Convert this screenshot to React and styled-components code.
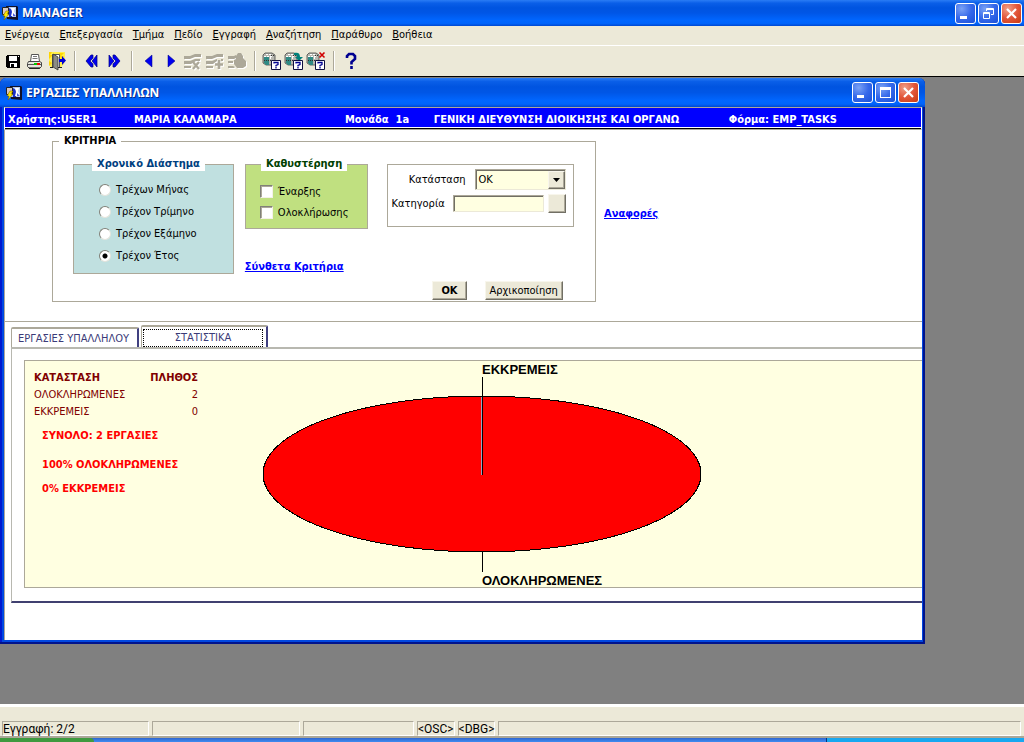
import styled, { createGlobalStyle, css } from "styled-components";

const GlobalStyle = createGlobalStyle`
  * {
    box-sizing: border-box;
  }
  body {
    margin: 0;
    font-family: "DejaVu Sans Condensed", "DejaVu Sans", sans-serif;
    font-size: 11px;
    line-height: 14px;
    color: #000;
    background: #808080;
  }
  button, input, select {
    font: inherit;
    color: inherit;
    margin: 0;
  }
`;

const Shell = styled.div`
  min-height: 100vh;
  display: flex;
  flex-direction: column;
`;

/* ---------- title bars ---------- */

const TitleBar = styled.header`
  display: flex;
  align-items: center;
  gap: 4px;
  height: ${(p) => (p.$child ? 29 : 26)}px;
  padding: 0 ${(p) => (p.$child ? 6 : 2)}px;
  color: #fff;
  background: linear-gradient(
    #2a7cf5 0%,
    #0a5fe8 12%,
    #0054e0 30%,
    #0056e6 50%,
    #0066ff 78%,
    #0064fb 90%,
    #0048d0 100%
  );
  border-radius: ${(p) => (p.$child ? "6px 6px 0 0" : "0")};

  h1, h2 {
    flex: 1;
    margin: 0;
    font-family: "Noto Sans", "Open Sans", sans-serif;
    font-size: 12px;
    line-height: 16px;
    font-weight: bold;
    text-shadow: 1px 1px 0 #0a2a8c;
  }
`;

const WindowButtons = styled.div`
  display: flex;
  gap: 2px;
`;

const WindowButton = styled.button`
  display: flex;
  width: 21px;
  height: 21px;
  padding: 0;
  border: 1px solid #fff;
  border-radius: 3px;
  background: ${(p) =>
    p.$close
      ? "radial-gradient(circle at 30% 25%, #f0a088, #e2563a 50%, #c83a10)"
      : "radial-gradient(circle at 30% 25%, #7aa2f5, #3568ea 50%, #1a50d8)"};

  svg {
    width: 19px;
    height: 19px;
  }
`;

/* ---------- menu and toolbar ---------- */

const MenuBar = styled.nav`
  display: flex;
  gap: 10px;
  height: 20px;
  padding: 2px 5px 0;
  background: #ece9d8;
  border-bottom: 1px solid #fff;

  a {
    color: #000;
    text-decoration: none;
  }
`;

const ToolBar = styled.div`
  display: flex;
  align-items: center;
  height: 31px;
  padding: 0 2px;
  background: #ece9d8;
  border-bottom: 1px solid #000;
`;

const ToolButton = styled.button`
  display: flex;
  align-items: center;
  justify-content: center;
  width: 22px;
  height: 22px;
  padding: 0;
  border: 0;
  background: none;

  svg {
    width: 20px;
    height: 20px;
  }
`;

const Separator = styled.span`
  width: 2px;
  height: 20px;
  margin: 0 5px 0 6px;
  background: #aca899;
  border-right: 1px solid #fff;
`;

/* ---------- inner window ---------- */

const Desktop = styled.main`
  flex: 1;
  padding-top: 1px;
  background: #808080;
`;

const ChildWindow = styled.section`
  width: 90.3%;
  min-width: 760px;
  background: #0048e0;
  border-radius: 6px 6px 0 0;
  box-shadow: inset -2px -2px 0 #00138c, inset 2px 0 0 #0019cf;
`;

const ChildBody = styled.div`
  margin: 0 3px 0 4px;
  padding-bottom: 4px;
`;

const Client = styled.div`
  display: flow-root;
  padding-bottom: 37px;
  background: #fff;
  border-left: 1px solid #aca899;
`;

const UserBar = styled.div`
  display: grid;
  grid-template-columns: 126fr 211fr 89fr 295fr 192fr;
  align-items: center;
  height: 23px;
  padding: 2px 0 0 3px;
  color: #fff;
  font-weight: bold;
  white-space: nowrap;
  background: linear-gradient(#0000ff 19px, #fff 19px, #fff 20px, #000 20px);
  border: 1px solid #fff;
  border-top-color: #aca899;
  border-bottom-color: #aca899;
`;

const Top = styled.div`
  display: flex;
  gap: 8px;
  padding: 4px 0 19px 47px;
  border-bottom: 1px solid #aca899;
`;

const Group = styled.fieldset`
  min-width: 0;
  margin: 0;
  padding: 0;
  border: 1px solid #aca899;

  legend {
    padding: 0 5px;
    font-weight: bold;
    white-space: nowrap;
    background: #fff;
  }
`;

const Criteria = styled(Group)`
  display: flex;
  gap: 11px;
  width: 544px;
  height: 168px;
  padding: 9px 20px 0;

  > legend {
    margin-left: -14px;
  }
`;

const TintedGroup = styled(Group)`
  background: ${(p) => p.$tint};
  padding: ${(p) => p.$pad};

  legend {
    margin: 0 auto;
    color: ${(p) => p.$ink};
  }
`;

const Column = styled.div`
  display: flex;
  flex-direction: column;
  align-items: flex-start;
  gap: 31px;
`;

const ColumnRight = styled.div`
  margin-left: 8px;
  padding-top: 7px;
`;

const Choice = styled.label`
  display: flex;
  align-items: center;
  gap: 5px;
  height: ${(p) => p.$row}px;
  margin-left: ${(p) => p.$indent || 0}px;
  white-space: nowrap;
`;

const Radio = styled.input`
  appearance: none;
  width: 12px;
  height: 12px;
  border: 1px solid;
  border-color: #808078 #e4e4dc #e4e4dc #808078;
  border-radius: 50%;
  background: #fff;

  &:checked {
    background: radial-gradient(circle, #000 2px, #fff 3px);
  }
`;

const CheckBox = styled.input`
  appearance: none;
  width: 13px;
  height: 13px;
  border: 1px solid;
  border-color: #808078 #f4f2e8 #f4f2e8 #808078;
  background: #fff;
  box-shadow: inset 1px 1px 0 #aca899;

  &:checked {
    background: #404040;
  }
`;

const Link = styled.a`
  color: #0000ff;
  font-weight: bold;
  white-space: nowrap;
`;

const Reports = styled.div`
  padding-top: 73px;
`;

const FilterBox = styled.div`
  display: flex;
  flex-direction: column;
  gap: 4px;
  width: 187px;
  height: 63px;
  padding: 4px 7px 0 3px;
  border: 1px solid #aca899;
`;

const FilterRow = styled.div`
  display: flex;
  align-items: center;
  justify-content: flex-end;
  gap: ${(p) => p.$gap}px;

  label {
    margin-right: ${(p) => (p.$spread ? "auto" : "0")};
    white-space: nowrap;
  }
`;

const sunken = css`
  border: 1px solid;
  border-color: #aca899 #ece9d8 #ece9d8 #aca899;
  box-shadow: inset 1px 1px 0 #716f64;
  background: #ffffe1;
`;

const raised = css`
  border: 1px solid;
  border-color: #f8f6ec #716f64 #716f64 #f8f6ec;
  box-shadow: inset -1px -1px 0 #aca899;
  background: #ece9d8;
`;

const SelectWrap = styled.span`
  position: relative;
  display: flex;
  width: 91px;
  height: 21px;
  ${sunken}

  select {
    appearance: none;
    width: 100%;
    padding: 0 20px 0 2px;
    border: 0;
    background: none;
  }
`;

const SelectArrow = styled.span`
  position: absolute;
  top: 1px;
  right: 0;
  display: flex;
  align-items: center;
  justify-content: center;
  width: 17px;
  height: 18px;
  pointer-events: none;
  ${raised}
`;

const TextBox = styled.input`
  width: 91px;
  height: 17px;
  padding: 0 3px;
  ${sunken}
`;

const PushButton = styled.button`
  height: 19px;
  min-width: 18px;
  padding: 0 ${(p) => p.$pad || 0}px;
  font-weight: ${(p) => (p.$strong ? "bold" : "normal")};
  line-height: 14px;
  white-space: nowrap;
  ${raised}
`;

const Actions = styled.div`
  display: flex;
  gap: 18px;
  margin: 54px 0 0 45px;
`;

/* ---------- tabs ---------- */

const Tabs = styled.div`
  display: flex;
  align-items: flex-end;
  gap: 2px;
  padding: 3px 0 0 6px;
`;

const Tab = styled.button`
  width: ${(p) => (p.$active ? 127 : 128)}px;
  height: ${(p) => (p.$active ? 22 : 20)}px;
  padding: 1px 3px 0 1px;
  color: #3b3b78;
  background: #fff;
  border: 1px solid #aca899;
  border-top-width: 2px;
  border-right: 2px solid #404080;
  border-bottom: 0;
  border-radius: 2px 2px 0 0;

  span {
    display: block;
    line-height: 16px;
    white-space: nowrap;
    border: 1px ${(p) => (p.$active ? "dotted #000" : "solid transparent")};
  }
`;

const TabPanel = styled.div`
  margin-left: 6px;
  padding: 11px 0 13px 12px;
  border: 2px solid #b8b8b0;
  border-width: 2px 0 2px 1px;
  border-bottom: 2px solid #404070;
`;

const Statistics = styled.div`
  display: flex;
  min-height: 228px;
  padding: 0 0 0 9px;
  background: #ffffe1;
  border: 1px solid #aca899;
  border-right: 0;
`;

const Summary = styled.div`
  width: 229px;
  padding-top: 8px;

  p {
    margin: 0 0 10px 8px;
    color: #ff0000;
    font-weight: bold;
  }
  p:first-of-type {
    margin: 9px 0 15px 8px;
  }
`;

const Table = styled.table`
  width: 164px;
  border-collapse: collapse;
  color: #800000;

  th, td {
    height: 17px;
    padding: 0;
    text-align: left;
    font-weight: normal;
  }
  thead th {
    font-weight: bold;
  }
  th:last-child, td:last-child {
    text-align: right;
  }
`;

const Chart = styled.svg`
  width: 440px;
  height: 226px;
  overflow: visible;

  text {
    font-family: "Liberation Sans", Arial, sans-serif;
    font-size: 13px;
    font-weight: bold;
  }
`;

/* ---------- status bar ---------- */

const StatusBar = styled.footer`
  display: flex;
  gap: 3px;
  padding: 14px 3px 0 2px;
  background: #ece9d8;
  border-top: 3px solid #fff;
  border-bottom: 2px solid #aca899;
  font-family: Roboto, "Liberation Sans", sans-serif;
  font-size: 12px;
`;

const StatusCell = styled.span`
  flex: ${(p) => p.$flex};
  height: 15px;
  white-space: nowrap;
  border: 1px solid;
  border-color: #aca899 #fff #fff #aca899;
`;

const TaskBar = styled.div`
  display: flex;
  height: 4px;
  background: linear-gradient(#2f66d0, #3f8cf0);

  i:first-child {
    width: 94px;
    background: #3f9a3f;
    border-radius: 0 4px 0 0;
  }
  i:last-child {
    width: 19.3%;
    margin-left: auto;
    background: #18a8f0;
    border-left: 1px solid #08307c;
  }
`;

/* ---------- icons ---------- */

const AppIcon = () => (
  <svg width="16" height="16" viewBox="0 0 16 16">
    <path d="M4 1h11l1 1v13l-11-1z" fill="#101028" />
    <path d="M4 2h10v10H4z" fill="#b8ccf0" />
    <path d="M.5 2.500h6v7h-6z" fill="#d8c8c0" stroke="#222" />
    <path d="M7 3l3 2v7H7z" fill="#1c30c8" />
    <path d="M9 3h4l-1 3 2 5H9l1-4z" fill="#fff" />
    <path d="M11 8l3 3h-3z" fill="#5060e0" />
    <path d="M4 6L1 11h2l-1 4 5-6H5l2-3z" fill="#ffe800" stroke="#6b5500" strokeWidth=".5" />
  </svg>
);

const MinimizeGlyph = () => (
  <svg viewBox="0 0 19 19">
    <path d="M4 12h7v3H4z" fill="#fff" />
  </svg>
);

const MaximizeGlyph = () => (
  <svg viewBox="0 0 19 19">
    <path d="M4 4h11v11H4zM5 7v7h9V7z" fill="#fff" fillRule="evenodd" />
  </svg>
);

const RestoreGlyph = () => (
  <svg viewBox="0 0 19 19" fill="none" stroke="#fff">
    <path d="M7.500 7V4.500h7v6H12M7 5.500h8" />
    <path d="M4.500 8.500h6v6h-6zM4 9.500h7" />
  </svg>
);

const CloseGlyph = () => (
  <svg viewBox="0 0 19 19">
    <path d="M5 5l9 9M14 5l-9 9" stroke="#fff" strokeWidth="2.200" />
  </svg>
);

const SaveIcon = () => (
  <svg viewBox="0 0 20 20" shapeRendering="crispEdges">
    <path d="M4 4h12l1 1v11l-1 1H4l-1-1V5z" fill="#000" />
    <path d="M6 5h8v5H6z" fill="#fff" />
    <path d="M7 12h7v4H7z" fill="#fff" />
    <path d="M8 13h3v4H8z" fill="#000" />
    <path d="M15 5h1v1h-1z" fill="#fff" />
  </svg>
);

const PrintIcon = () => (
  <svg viewBox="0 0 20 20">
    <path d="M6.500 3.500h7l1 7h-9z" fill="#fff" stroke="#555" />
    <path d="M8 5.500h4M7.500 7.500h5" stroke="#777" />
    <path d="M3.500 10.500h11l2 1v4l-2 2h-10l-2-2v-3z" fill="#e4e4dc" stroke="#444" />
    <path d="M3 13.500h13" stroke="#555" />
    <path d="M9 12h3v2H9z" fill="#0c0" />
    <path d="M12 12h3v2h-3z" fill="#e00" />
    <path d="M4 17h11" stroke="#000" />
  </svg>
);

const ExitIcon = () => (
  <svg viewBox="0 0 20 20">
    <path d="M2 1h16v4l-1 8-3 3H4l-2-2z" fill="#fff04a" />
    <path d="M2 1h3l-2 3h3L2 8zM12 2h5l-3 3h3l-3 3zM5 12l-3 3v-5z" fill="#ffd400" />
    <path d="M5.500 16V3.500h7V16" fill="#fff" stroke="#555" />
    <path d="M6 3l5 3v13l-5-3z" fill="#8c8c84" stroke="#333" strokeWidth=".8" />
    <path d="M12 8h3V5l4 4.500-4 4.500v-3h-3z" fill="#0000d8" />
    <path d="M3 16.500h3M11 16.500h4" stroke="#222" />
  </svg>
);

const DoubleArrow = ({ right }) => (
  <svg viewBox="0 0 20 20">
    <g transform={right ? "translate(20 0) scale(-1 1)" : undefined}>
      <path d="M9 4h2v3l-3 3 3 3v3H9l-5-6zM15 4v12l-5-6z" fill="#0000f0" stroke="#000080" strokeWidth=".7" />
    </g>
  </svg>
);

const SingleArrow = ({ right }) => (
  <svg viewBox="0 0 20 20">
    <path d={right ? "M7 4l7 6-7 6z" : "M13 4l-7 6 7 6z"} fill="#0000f0" stroke="#000080" strokeWidth=".5" />
  </svg>
);

const disabledShapes = {
  remove: (
    <>
      <path d="M1 5h6l5-2h6v3h-6L7 8H1zM1 10h6l5-2h5v2h-4l-5 3H1zM1 15h7v2H1z" />
      <path d="M10 11l6 7M16 11l-6 7" fill="none" strokeWidth="2.200" />
    </>
  ),
  insert: (
    <>
      <path d="M1 5h6l5-2h6v3h-6L7 8H1zM1 10h6l5-2v2l-4 3H1zM1 15h7v2H1zM16 8h2v2h-2z" />
      <path d="M14 9v9M10 13.500h8" fill="none" strokeWidth="2.600" />
    </>
  ),
  lock: (
    <>
      <path d="M1 5h6l2-1v3L7 8H1zM1 10h5v2H1zM1 15h5l2 1-1 1H1z" />
      <path d="M9 8V5l2-3h3l2 3v2l3 3v5l-3 2h-6l-3-4V9z" />
    </>
  ),
};

const DisabledIcon = ({ kind }) => (
  <svg viewBox="0 0 20 20">
    <g transform="translate(1 1)" fill="#fff" stroke="#fff" strokeWidth="0">
      {disabledShapes[kind]}
    </g>
    <g fill="#aca899" stroke="#aca899" strokeWidth="0">
      {disabledShapes[kind]}
    </g>
  </svg>
);

const QueryIcon = ({ kind }) => (
  <svg viewBox="0 0 20 20">
    <path d="M1 4l2-2h7l3 2v8l-2 2H4l-3-2z" fill="#b8b8b0" stroke="#444" strokeWidth=".8" />
    <path d="M3 6h4v8H4l-2-2V5z" fill="#2f8a84" />
    <path d="M4 3.500h6M2 5.500h9M8.500 6v3" stroke="#fff" strokeDasharray="2 1" />
    <path d="M2 9.500h7M9 4.500h3" stroke="#333" strokeDasharray="1 1" />
    {kind === "run" && <path d="M10 2c4-1 6 0 6 4h3l-4 4-4-4h2c0-2-1-2-3-2z" fill="#00807a" />}
    {kind === "cancel" && <path d="M13.500 1.500l5 5M18.500 1.500l-5 5" stroke="#d00000" strokeWidth="1.600" />}
    <path d="M9.500 9.500h9v9h-9z" fill="#fff" stroke="#101040" />
    <path d="M12 12.500v-1h4v2l-2 1v1M14 16v1.500" fill="none" stroke="#000090" strokeWidth="1.300" />
  </svg>
);

const HelpIcon = () => (
  <svg viewBox="0 0 20 20">
    <path d="M6 7V5l2-2h4l2 2v3l-3.500 3v2.500M10.500 15v3" fill="none" stroke="#000090" strokeWidth="2.600" />
  </svg>
);

/* ---------- data ---------- */

const menu = [
  "Ενέργεια",
  "Επεξεργασία",
  "Τμήμα",
  "Πεδίο",
  "Εγγραφή",
  "Αναζήτηση",
  "Παράθυρο",
  "Βοήθεια",
];

const toolGroups = [
  [
    ["Αποθήκευση", <SaveIcon />],
    ["Εκτύπωση", <PrintIcon />],
    ["Έξοδος", <ExitIcon />],
  ],
  [
    ["Προηγούμενο τμήμα", <DoubleArrow />],
    ["Επόμενο τμήμα", <DoubleArrow right />],
  ],
  [
    ["Προηγούμενη εγγραφή", <SingleArrow />],
    ["Επόμενη εγγραφή", <SingleArrow right />],
    ["Διαγραφή", <DisabledIcon kind="remove" />, true],
    ["Εισαγωγή", <DisabledIcon kind="insert" />, true],
    ["Κλείδωμα", <DisabledIcon kind="lock" />, true],
  ],
  [
    ["Αναζήτηση", <QueryIcon />],
    ["Εκτέλεση αναζήτησης", <QueryIcon kind="run" />],
    ["Ακύρωση αναζήτησης", <QueryIcon kind="cancel" />],
  ],
  [["Βοήθεια", <HelpIcon />]],
];

const periods = ["Τρέχων Μήνας", "Τρέχον Τρίμηνο", "Τρέχον Εξάμηνο", "Τρέχον Έτος"];
const delays = ["Έναρξης", "Ολοκλήρωσης"];
const counts = [
  ["ΟΛΟΚΛΗΡΩΜΕΝΕΣ", 2],
  ["ΕΚΚΡΕΜΕΙΣ", 0],
];

function Controls({ restore }) {
  return (
    <WindowButtons>
      <WindowButton aria-label="Ελαχιστοποίηση">
        <MinimizeGlyph />
      </WindowButton>
      <WindowButton aria-label="Μεγιστοποίηση">
        {restore ? <RestoreGlyph /> : <MaximizeGlyph />}
      </WindowButton>
      <WindowButton $close aria-label="Κλείσιμο">
        <CloseGlyph />
      </WindowButton>
    </WindowButtons>
  );
}

function CriteriaForm() {
  return (
    <Top>
      <Criteria>
        <legend>ΚΡΙΤΗΡΙΑ</legend>
        <Column>
          <TintedGroup $tint="#c0e0e0" $ink="#004080" $pad="8px 28px 6px 18px">
            <legend>Χρονικό Διάστημα</legend>
            {periods.map((item, index) => (
              <Choice key={item} $row={22} $indent={7}>
                <Radio type="radio" name="period" defaultChecked={index === 3} />
                {item}
              </Choice>
            ))}
          </TintedGroup>
        </Column>
        <Column>
          <TintedGroup $tint="#c0e080" $ink="#004000" $pad="10px 19px 5px 14px">
            <legend>Καθυστέρηση</legend>
            {delays.map((item) => (
              <Choice key={item} $row={21}>
                <CheckBox type="checkbox" />
                {item}
              </Choice>
            ))}
          </TintedGroup>
          <Link href="#criteria">Σύνθετα Κριτήρια</Link>
        </Column>
        <ColumnRight>
          <FilterBox>
            <FilterRow $gap={10}>
              <label htmlFor="status">Κατάσταση</label>
              <SelectWrap>
                <select id="status" defaultValue="OK">
                  <option>OK</option>
                </select>
                <SelectArrow>
                  <svg width="7" height="4" viewBox="0 0 7 4">
                    <path d="M0 0h7L3.500 4z" />
                  </svg>
                </SelectArrow>
              </SelectWrap>
            </FilterRow>
            <FilterRow $gap={4} $spread>
              <label htmlFor="category">Κατηγορία</label>
              <TextBox id="category" />
              <PushButton type="button" aria-label="Επιλογή" />
            </FilterRow>
          </FilterBox>
          <Actions>
            <PushButton type="button" $strong $pad={8}>
              OK
            </PushButton>
            <PushButton type="button" $pad={4}>
              Αρχικοποίηση
            </PushButton>
          </Actions>
        </ColumnRight>
      </Criteria>
      <Reports>
        <Link href="#reports">Αναφορές</Link>
      </Reports>
    </Top>
  );
}

export default function App() {
  return (
    <Shell>
      <GlobalStyle />
      <TitleBar>
        <AppIcon />
        <h1>MANAGER</h1>
        <Controls restore />
      </TitleBar>
      <MenuBar>
        {menu.map((item) => (
          <a key={item} href="#menu">
            <u>{item[0]}</u>
            {item.slice(1)}
          </a>
        ))}
      </MenuBar>
      <ToolBar>
        {toolGroups.map((group, index) => [
          index > 0 && <Separator key={"sep" + index} />,
          ...group.map(([label, icon, disabled]) => (
            <ToolButton key={label} aria-label={label} disabled={disabled}>
              {icon}
            </ToolButton>
          )),
        ])}
      </ToolBar>
      <Desktop>
        <ChildWindow>
          <TitleBar $child>
            <AppIcon />
            <h2>ΕΡΓΑΣΙΕΣ ΥΠΑΛΛΗΛΩΝ</h2>
            <Controls />
          </TitleBar>
          <ChildBody>
            <UserBar>
              <span>Χρήστης:USER1</span>
              <span>ΜΑΡΙΑ ΚΑΛΑΜΑΡΑ</span>
              <span>Μονάδα&nbsp; 1a</span>
              <span>ΓΕΝΙΚΗ ΔΙΕΥΘΥΝΣΗ ΔΙΟΙΚΗΣΗΣ ΚΑΙ ΟΡΓΑΝΩ</span>
              <span>Φόρμα: EMP_TASKS</span>
            </UserBar>
            <Client>
              <CriteriaForm />
              <Tabs role="tablist">
                <Tab role="tab" aria-selected={false}>
                  <span>ΕΡΓΑΣΙΕΣ ΥΠΑΛΛΗΛΟΥ</span>
                </Tab>
                <Tab role="tab" aria-selected $active>
                  <span>ΣΤΑΤΙΣΤΙΚΑ</span>
                </Tab>
              </Tabs>
              <TabPanel role="tabpanel">
                <Statistics>
                  <Summary>
                    <Table>
                      <thead>
                        <tr>
                          <th>ΚΑΤΑΣΤΑΣΗ</th>
                          <th>ΠΛΗΘΟΣ</th>
                        </tr>
                      </thead>
                      <tbody>
                        {counts.map(([name, count]) => (
                          <tr key={name}>
                            <td>{name}</td>
                            <td>{count}</td>
                          </tr>
                        ))}
                      </tbody>
                    </Table>
                    <p>ΣΥΝΟΛΟ: 2 ΕΡΓΑΣΙΕΣ</p>
                    <p>100% ΟΛΟΚΛΗΡΩΜΕΝΕΣ</p>
                    <p>0% ΕΚΚΡΕΜΕΙΣ</p>
                  </Summary>
                  <Chart viewBox="0 0 440 226">
                    <ellipse cx="219" cy="113" rx="219" ry="78" fill="#f00" stroke="#000" shapeRendering="crispEdges" />
                    <path d="M218.500 36v78" stroke="#a0a0c0" />
                    <path d="M219.500 16v98M219.500 191v20" stroke="#000" />
                    <text x="219" y="13">ΕΚΚΡΕΜΕΙΣ</text>
                    <text x="219" y="224">ΟΛΟΚΛΗΡΩΜΕΝΕΣ</text>
                  </Chart>
                </Statistics>
              </TabPanel>
            </Client>
          </ChildBody>
        </ChildWindow>
      </Desktop>
      <StatusBar>
        <StatusCell $flex="0 0 147px">Εγγραφή: 2/2</StatusCell>
        <StatusCell $flex="0 0 148px" />
        <StatusCell $flex="0 0 111px" />
        <StatusCell $flex="0 0 36px">&lt;OSC&gt;</StatusCell>
        <StatusCell $flex="0 0 36px">&lt;DBG&gt;</StatusCell>
        <StatusCell $flex="1" />
      </StatusBar>
      <TaskBar>
        <i />
        <i />
      </TaskBar>
    </Shell>
  );
}
